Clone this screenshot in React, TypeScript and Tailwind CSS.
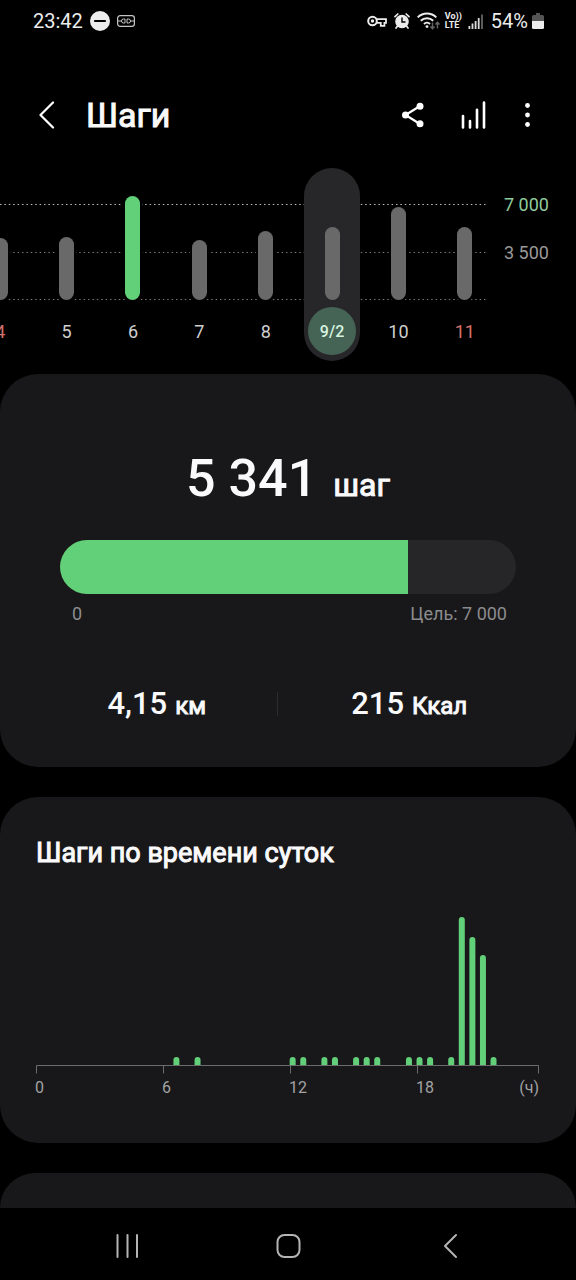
interface Day {
    label: string;
    height: number;
    reached?: boolean;
    selected?: boolean;
    sunday?: boolean;
}

const days: Day[] = [
    { label: "4", height: 62, sunday: true },
    { label: "5", height: 63 },
    { label: "6", height: 104, reached: true },
    { label: "7", height: 60 },
    { label: "8", height: 69 },
    { label: "9/2", height: 73, selected: true },
    { label: "10", height: 93 },
    { label: "11", height: 73, sunday: true },
];

// half-hour slots counted from midnight
const slots = [
    { slot: 13, height: 8 },
    { slot: 15, height: 8 },
    { slot: 24, height: 8 },
    { slot: 25, height: 8 },
    { slot: 27, height: 8 },
    { slot: 28, height: 8 },
    { slot: 30, height: 8 },
    { slot: 31, height: 8 },
    { slot: 32, height: 8 },
    { slot: 35, height: 8 },
    { slot: 36, height: 8 },
    { slot: 37, height: 8 },
    { slot: 39, height: 8 },
    { slot: 40, height: 148 },
    { slot: 41, height: 128 },
    { slot: 42, height: 110 },
    { slot: 43, height: 8 },
];

const SLOT_WIDTH = 10.57;
const AXIS_Y = 149;

const StatusBar = () => (
    <div className="flex h-[42px] items-center justify-between pr-8 pl-[33px] text-[#ececec]">
        <div className="flex items-center gap-[7px]">
            <span className="text-xl">23:42</span>
            <svg className="size-5" viewBox="0 0 20 20">
                <circle cx="10" cy="10" r="10" fill="#ececec" />
                <path d="M5 10h10" stroke="#000" strokeWidth="2.2" strokeLinecap="round" />
            </svg>
            <svg className="h-3 w-[18px]" viewBox="0 0 18 12" fill="none" stroke="#c4c4c4">
                <rect x=".6" y=".6" width="16.8" height="10.8" rx="2.6" strokeWidth="1.2" />
                <path d="M1 6h4M13 6h4M8 4H6.5a2 2 0 0 0 0 4H8zM10 4h1.5a2 2 0 0 1 0 4H10z" strokeWidth="1" />
            </svg>
        </div>
        <div className="flex items-center gap-[7px]">
            <svg className="h-3 w-5" viewBox="0 0 20 12">
                <circle cx="5.5" cy="6" r="4.3" fill="none" stroke="#ececec" strokeWidth="2" />
                <circle cx="5.5" cy="6" r="1.7" fill="#ececec" />
                <path d="M9.6 4.2h9.4v3.6h-1.6v3h-3.6v-3H9.6" fill="none" stroke="#ececec" strokeWidth="1.8" />
            </svg>
            <svg className="size-4" viewBox="0 0 16 16" fill="none" stroke="#ececec" strokeLinecap="round">
                <circle cx="8" cy="8.5" r="6.8" fill="#ececec" stroke="none" />
                <path d="M1 3.6L3.8 1M15 3.6L12.2 1M3.5 13L2 15M12.5 13l1.5 2" strokeWidth="1.7" />
                <path d="M8 5v4h3" stroke="#000" strokeWidth="1.4" />
            </svg>
            <svg className="-mr-0.5 h-[18px] w-[23px]" viewBox="0 0 23 18" fill="none" stroke="#ececec" strokeWidth="2">
                <path d="M.7 5.4a13 13 0 0 1 18.6 0" />
                <path d="M3.8 8.8a8.6 8.6 0 0 1 12.4 0" />
                <path d="M7 12a4.3 4.3 0 0 1 6 0" />
                <circle cx="10" cy="14.6" r="1.4" fill="#ececec" stroke="none" />
                <path d="M15.5 10.5v6m-2-2l2 2.2 2-2.2M20.5 16.5v-6m-2 2l2-2.2 2 2.2" stroke="#666" strokeWidth="1.4" />
            </svg>
            <div className="flex w-4 flex-col text-[9px] leading-[9px] font-bold">
                <span>Vo))</span>
                <span>LTE</span>
            </div>
            <svg className="h-4 w-4" viewBox="0 0 16 16" strokeWidth="1.8" stroke="#dcdcdc">
                <path d="M1.4 16v-3M4.5 16v-5.5M7.6 16V8M10.7 16V5" />
                <path d="M14 16V1.5" stroke="#666" />
            </svg>
            <div className="flex items-center gap-1">
                <span className="text-xl">54%</span>
                <svg className="h-4 w-3" viewBox="0 0 12 16">
                    <path d="M4 0h4v2h2.5A1.5 1.5 0 0 1 12 3.5V8H0V3.5A1.5 1.5 0 0 1 1.5 2H4z" fill="#555" />
                    <path d="M0 8h12v6.5A1.5 1.5 0 0 1 10.5 16h-9A1.5 1.5 0 0 1 0 14.5z" fill="#ececec" />
                </svg>
            </div>
        </div>
    </div>
);

const Header = () => (
    <header className="flex h-[126px] items-center pt-5 pr-[33px] pl-8">
        <button aria-label="Назад" className="flex h-12 w-[54px] items-center">
            <svg className="h-7 w-[30px]" viewBox="0 0 30 28" fill="none" stroke="#fff" strokeWidth="2.2" strokeLinecap="round" strokeLinejoin="round">
                <path d="M21 1.5L8.5 14 21 26.5" />
            </svg>
        </button>
        <h1 className="flex-1 text-[34px] leading-10 font-normal text-[#fafafa] [-webkit-text-stroke:1px]">Шаги</h1>
        <div className="flex items-center gap-9">
            <button aria-label="Поделиться">
                <svg className="h-[26px] w-6" viewBox="0 0 24 26" fill="#fff">
                    <path d="M19 4L4.5 13 19 22" fill="none" stroke="#fff" strokeWidth="2.2" />
                    <circle cx="19" cy="4.2" r="3.5" />
                    <circle cx="4.5" cy="13" r="3.5" />
                    <circle cx="19" cy="21.8" r="3.5" />
                </svg>
            </button>
            <button aria-label="Статистика">
                <svg className="h-7 w-[26px]" viewBox="0 0 26 28" stroke="#fff" strokeWidth="2.6" strokeLinecap="round">
                    <path d="M2 15v11.5M9 20v6.5M16 8.8v17.7M23 1.5v25" />
                </svg>
            </button>
            <button aria-label="Ещё">
                <svg className="h-7 w-5" viewBox="0 0 20 28" fill="#fff">
                    <circle cx="4.5" cy="4.5" r="2.4" />
                    <circle cx="4.5" cy="14" r="2.4" />
                    <circle cx="4.5" cy="23.5" r="2.4" />
                </svg>
            </button>
        </div>
    </header>
);

const WeekChart = () => (
    <section className="relative flex h-[193px] overflow-hidden">
        {/* Grid lines */}
        <svg className="absolute inset-y-0 left-0 h-full w-[calc(100%-88px)]" stroke="#777" strokeDasharray="1.5 2.9">
            <line x1="0" x2="100%" y1="36.5" y2="36.5" stroke="#b5c5b5" />
            <line x1="0" x2="100%" y1="84.5" y2="84.5" />
            <line x1="0" x2="100%" y1="131.5" y2="131.5" />
        </svg>

        <div className="relative -ml-[33px] flex flex-1">
            {days.map((day) => (
                <div key={day.label} className="flex flex-1 justify-center">
                    <button
                        className={`flex w-14 flex-col items-center justify-end rounded-full pb-1.5 ${day.selected ? "bg-[#27272a]" : ""}`}
                    >
                        <span
                            className={`w-[15px] rounded-full ${day.reached ? "bg-[#62cf79]" : "bg-[#696969]"} ${day.selected ? "" : "ring-2 ring-black"}`}
                            style={{ height: day.height }}
                        />
                        <span
                            className={`mt-[7px] flex size-12 items-center justify-center rounded-full pt-0.5 ${
                                day.selected
                                    ? "bg-[#466456] text-base font-medium text-[#d5f3df]"
                                    : day.sunday
                                      ? "text-lg text-[#d4706c]"
                                      : "text-lg text-[#cfcfcf]"
                            }`}
                        >
                            {day.label}
                        </span>
                    </button>
                </div>
            ))}
        </div>

        <div className="flex w-[78px] flex-col gap-6 pt-[25px] pl-1.5 text-lg leading-6">
            <span className="text-[#8fcb9d]">7 000</span>
            <span className="text-[#999]">3 500</span>
        </div>
    </section>
);

const SummaryCard = () => (
    <section className="mt-[13px] rounded-[38px] bg-[#18181a] px-[60px] pt-[73px] pb-[43px]">
        <p className="flex items-baseline justify-center gap-4 leading-[64px] text-[#fafafc]">
            <span className="text-[52px] font-medium">5 341</span>
            <span className="text-[32px] [-webkit-text-stroke:1px]">шаг</span>
        </p>

        <div
            role="progressbar"
            aria-label="Шаги за день"
            aria-valuemin={0}
            aria-valuemax={7000}
            aria-valuenow={5341}
            className="mt-[23px] h-[54px] overflow-hidden rounded-full bg-[#262628]"
        >
            <div className="h-full bg-[#62cf79]" style={{ width: `${(5341 / 7000) * 100}%` }} />
        </div>
        <div className="mt-2 flex justify-between pr-[9px] pl-3 text-lg leading-6 text-[#8c8c8e]">
            <span>0</span>
            <span>Цель: 7 000</span>
        </div>

        <div className="-mx-6 mt-[58px] flex items-center text-[#fafafc]">
            <p className="flex flex-12 items-baseline justify-center gap-2 leading-10">
                <span className="text-[31px] font-medium">4,15</span>
                <span className="text-2xl [-webkit-text-stroke:1px]">км</span>
            </p>
            <span className="h-6 w-px bg-[#2c2c2e]" />
            <p className="flex flex-13 items-baseline justify-center gap-2 leading-10">
                <span className="text-[31px] font-medium">215</span>
                <span className="text-2xl [-webkit-text-stroke:1px]">Ккал</span>
            </p>
        </div>
    </section>
);

const HoursCard = () => (
    <section className="mt-[30px] rounded-[38px] bg-[#18181a] px-9 pt-9 pb-[33px]">
        <h2 className="text-[27px] leading-10 font-normal text-[#fafafc] [-webkit-text-stroke:1px]">
            Шаги по времени суток
        </h2>
        <svg className="mt-[43px] w-full overflow-visible" viewBox="0 0 504 194">
            {slots.map(({ slot, height }) => (
                <path
                    key={slot}
                    d={`M${slot * SLOT_WIDTH} ${AXIS_Y}v${3 - height}a3 3 0 0 1 6 0v${height - 3}z`}
                    fill="#62cf79"
                />
            ))}
            <path
                d="M.5 157.5v-8h502v8M127.5 149.5v8M254.5 149.5v8M381.5 149.5v8"
                fill="none"
                stroke="#6c6c6e"
            />
            <g fill="#a2a2a4" fontSize="16">
                <text x="-1" y="177">0</text>
                <text x="126" y="177">6</text>
                <text x="253" y="177">12</text>
                <text x="380" y="177">18</text>
                <text x="503" y="177" textAnchor="end">(ч)</text>
            </g>
        </svg>
    </section>
);

const NavBar = () => (
    <nav className="sticky bottom-0 flex h-[72px] items-center justify-around bg-black px-[47px] pt-1">
        <button aria-label="Последние приложения">
            <svg className="size-7" viewBox="0 0 28 28" stroke="#b4b4b4" strokeWidth="2" strokeLinecap="round">
                <path d="M4.5 3v22M14.5 3v22M24 3v22" />
            </svg>
        </button>
        <button aria-label="Главный экран">
            <svg className="size-7" viewBox="0 0 28 28" fill="none" stroke="#b4b4b4" strokeWidth="2">
                <rect x="3.5" y="3" width="22" height="22" rx="7" />
            </svg>
        </button>
        <button aria-label="Назад">
            <svg className="size-7" viewBox="0 0 28 28" fill="none" stroke="#b4b4b4" strokeWidth="2" strokeLinecap="round" strokeLinejoin="round">
                <path d="M21 3L10 14l11 11" />
            </svg>
        </button>
    </nav>
);

const App = () => {
    return (
        <div className="flex min-h-screen flex-col bg-black font-['Roboto',sans-serif]">
            <StatusBar />
            <Header />
            <main className="flex flex-1 flex-col">
                <WeekChart />
                <SummaryCard />
                <HoursCard />
                <section className="mt-[30px] flex-1 rounded-t-[38px] bg-[#18181a]" />
            </main>
            <NavBar />
        </div>
    );
};

export default App;
